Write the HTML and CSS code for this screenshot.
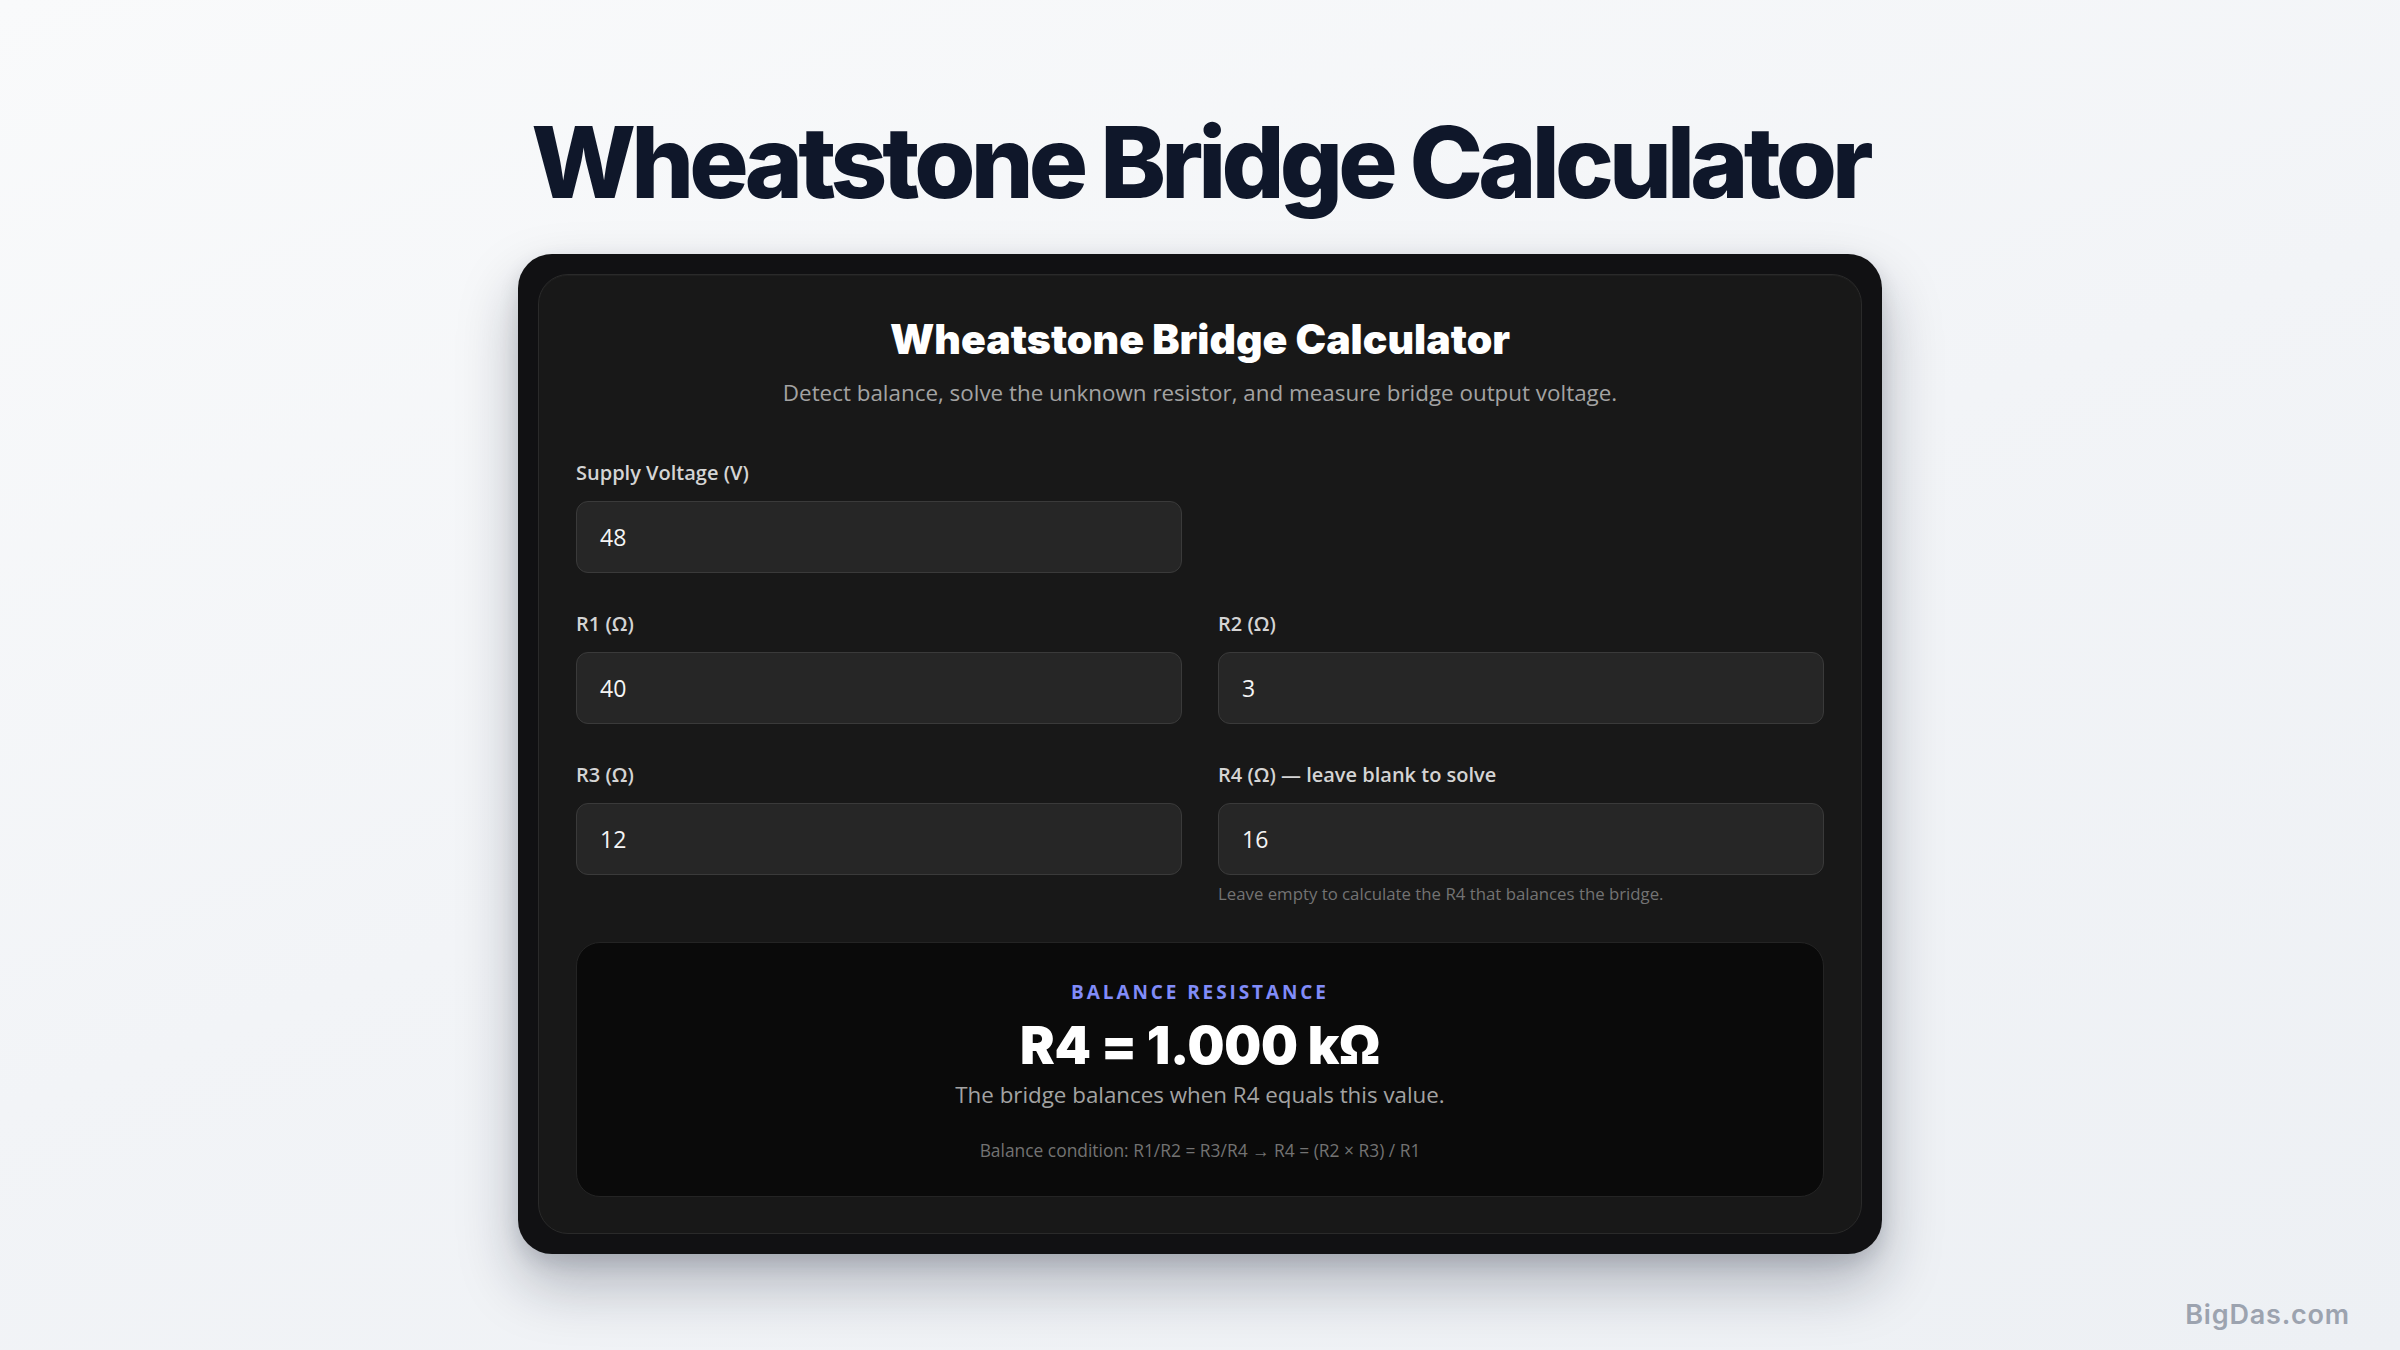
FILE: index.html
```html
<!DOCTYPE html>
<html lang="en">
<head>
<meta charset="utf-8">
<title>Wheatstone Bridge Calculator</title>
<link rel="stylesheet" href="styles.css">
</head>
<body>
<main class="page">
  <h1 class="page-title">Wheatstone Bridge Calculator</h1>
  <section class="frame">
    <div class="card">
      <h2 class="card-title">Wheatstone Bridge Calculator</h2>
      <p class="card-sub">Detect balance, solve the unknown resistor, and measure bridge output voltage.</p>
      <div class="fields">
        <div class="field">
          <label class="label">Supply Voltage (V)</label>
          <div class="input">48</div>
        </div>
        <div class="field empty"></div>
        <div class="field">
          <label class="label">R1 (Ω)</label>
          <div class="input">40</div>
        </div>
        <div class="field">
          <label class="label">R2 (Ω)</label>
          <div class="input">3</div>
        </div>
        <div class="field">
          <label class="label">R3 (Ω)</label>
          <div class="input">12</div>
        </div>
        <div class="field">
          <label class="label">R4 (Ω) — leave blank to solve</label>
          <div class="input">16</div>
          <p class="hint">Leave empty to calculate the R4 that balances the bridge.</p>
        </div>
      </div>
      <div class="result">
        <div class="result-kicker">BALANCE RESISTANCE</div>
        <div class="result-value">R4 = 1.000 kΩ</div>
        <div class="result-desc">The bridge balances when R4 equals this value.</div>
        <div class="result-formula">Balance condition: R1/R2 = R3/R4 → R4 = (R2 × R3) / R1</div>
      </div>
    </div>
  </section>
</main>
<div class="brand">BigDas.com</div>
</body>
</html>
```

FILE: styles.css
```css
html, body {
  margin: 0;
  padding: 0;
}
body {
  min-height: 100vh;
  background: linear-gradient(160deg, #f9fafb 0%, #f2f4f7 50%, #edf0f4 100%);
  font-family: "Open Sans", "Liberation Sans", sans-serif;
  position: relative;
}
.page {
  padding-top: 103px;
  display: flex;
  flex-direction: column;
  align-items: center;
}
.page-title {
  margin: 0;
  font-family: Inter, "Liberation Sans", sans-serif;
  font-weight: 800;
  font-size: 99px;
  line-height: 1.2;
  letter-spacing: -0.049em;
  color: #0f172a;
}
.frame {
  margin-top: 32px;
  width: 1364px;
  box-sizing: border-box;
  padding: 20px;
  background: #111113;
  border-radius: 34px;
  box-shadow: 0 30px 60px rgba(15, 23, 42, 0.28), 0 8px 20px rgba(15, 23, 42, 0.12);
}
.card {
  background: #181818;
  border: 1px solid #2a2a2a;
  border-radius: 30px;
  padding: 40px 37px 36px;
  box-shadow: inset 0 1px 0 rgba(255,255,255,0.03);
}
.card-title {
  margin: 0;
  text-align: center;
  font-family: Inter, "Liberation Sans", sans-serif;
  font-weight: 900;
  font-size: 41px;
  line-height: 48px;
  letter-spacing: 0;
  color: #ffffff;
}
.card-sub {
  margin: 14px 0 0;
  text-align: center;
  font-size: 22.4px;
  line-height: 32px;
  color: #a3a3a3;
}
.fields {
  margin-top: 50px;
  display: grid;
  grid-template-columns: 1fr 1fr;
  column-gap: 36px;
  row-gap: 37px;
}
.field {
  display: flex;
  flex-direction: column;
}
.label {
  font-size: 20px;
  line-height: 28px;
  font-weight: 600;
  color: #d4d4d4;
  margin-bottom: 14px;
}
.input {
  height: 72px;
  box-sizing: border-box;
  border: 1px solid #3a3a3a;
  border-radius: 12px;
  background: #262626;
  padding: 0 23px;
  display: flex;
  align-items: center;
  font-size: 23px;
  color: #f5f5f5;
}
.hint {
  margin: 8px 0 0;
  font-size: 16.8px;
  line-height: 22px;
  color: #737373;
}
.result {
  margin-top: 37px;
  background: #0a0a0a;
  border: 1px solid #242424;
  border-radius: 24px;
  padding: 36px 24px 35px;
  text-align: center;
}
.result-kicker {
  font-size: 19px;
  line-height: 26px;
  font-weight: 700;
  letter-spacing: 2.9px;
  color: #818cf8;
}
.result-value {
  margin-top: 10px;
  font-family: Inter, "Liberation Sans", sans-serif;
  font-weight: 900;
  font-size: 52px;
  line-height: 62px;
  letter-spacing: -0.005em;
  color: #ffffff;
}
.result-desc {
  margin-top: 3px;
  font-size: 22.35px;
  line-height: 30px;
  color: #a3a3a3;
}
.result-formula {
  margin-top: 29px;
  font-size: 17.4px;
  line-height: 22px;
  color: #737373;
}
.brand {
  position: absolute;
  right: 50px;
  bottom: 22px;
  font-family: Inter, "Liberation Sans", sans-serif;
  font-weight: 600;
  font-size: 27px;
  line-height: 1;
  letter-spacing: 0.03em;
  color: #9ca3af;
}
```
